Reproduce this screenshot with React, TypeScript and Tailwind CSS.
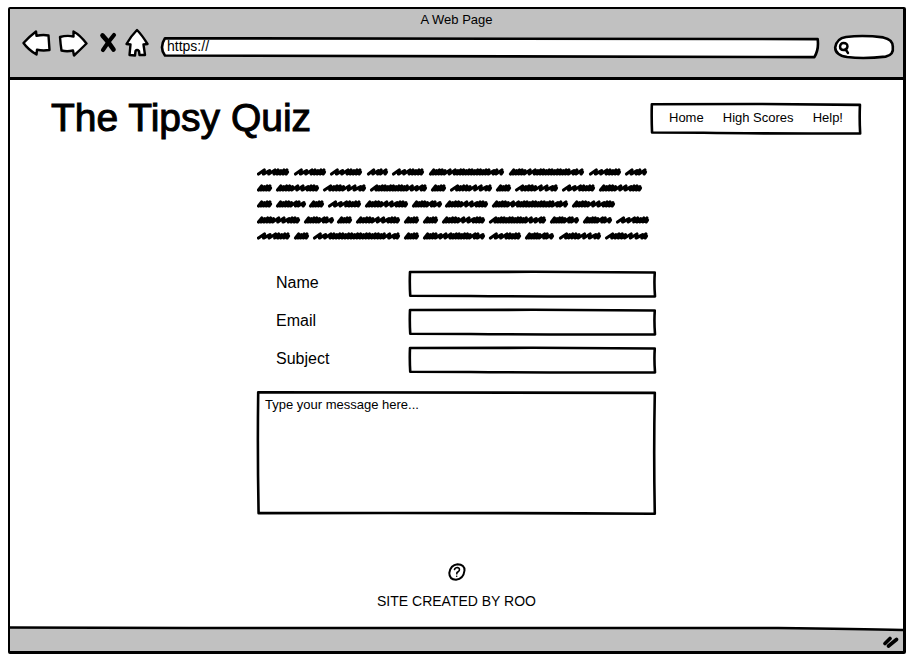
import React from "react";

/* Hand-drawn box outline that stretches with the element it decorates. */
function SketchBox({ d, fill = "none" }: { d?: string; fill?: string }) {
  return (
    <svg
      aria-hidden="true"
      className="pointer-events-none absolute inset-0 h-full w-full overflow-visible"
      viewBox="0 0 100 100"
      preserveAspectRatio="none"
    >
      <path
        d={d ?? "M0.400 4 Q25 4 50 3 Q75 5 99.500 6 Q99.200 50 99.600 98 Q50 99 25 96 L0.500 95 Q0.200 50 0.400 4Z"}
        fill={fill}
        stroke="#000"
        strokeWidth="2.6"
        strokeLinejoin="round"
        vectorEffect="non-scaling-stroke"
      />
    </svg>
  );
}

function ArrowLeft() {
  return (
    <svg width="30" height="28" viewBox="0 0 30 28" fill="#fff" stroke="#000" strokeWidth="2.4" strokeLinejoin="round">
      <path d="M1.500 14 Q8 7 14 2.500 L14.500 6.800 Q21 5.500 26.500 6.500 L27.500 21 Q21 22 15 20.800 L14.500 25.500 Q6 20.500 1.500 14Z" />
    </svg>
  );
}

function ArrowRight() {
  return (
    <svg width="30" height="28" viewBox="0 0 30 28" fill="#fff" stroke="#000" strokeWidth="2.4" strokeLinejoin="round">
      <path d="M2 8 Q9 6 15.500 7.500 L15.500 2.500 Q22 6 28.500 14.500 Q22 21 16 26.500 L15 21.500 Q9 23 3.500 21.500 Q2.500 15 2 8Z" />
    </svg>
  );
}

function Cross() {
  return (
    <svg width="18" height="22" viewBox="0 0 18 22" fill="none" stroke="#000" strokeLinecap="round">
      <path d="M3.500 3.500 Q9 9 14.500 17.500" strokeWidth="4.600" />
      <path d="M15 3 Q9 10 4 18" strokeWidth="4.200" />
    </svg>
  );
}

function House() {
  return (
    <svg width="24" height="30" viewBox="0 0 24 30" fill="#fff" stroke="#000" strokeWidth="2.4" strokeLinejoin="round">
      <path d="M12 2 Q17 7 22.500 16 L18.500 16.500 L20 27 L14.500 27 L14 23 Q12 21 10.500 23 L10 27.500 L4.500 27 L5.500 16.500 L1.500 16 Q6 8 12 2Z" />
    </svg>
  );
}

/* Each word: start, end, and stroke rhythm (l = loose, d = dense). */
type Word = [number, number, string];
const A = "llldddd";
const B = "dddd";
const C = "dddddlllddd";
const D = "lddddllld";
const E = "dddddldl";
const F = "ldddddddddddllld";
const G = "dddddllddddddddddddldl";

const scribbleRows: Word[][] = [
  [[0, 31, A], [37, 68, A], [73, 104, A], [110, 130, "lldl"], [135, 166, A], [172, 246, G], [252, 326, G], [332, 363, A], [368, 389, "lldl"]],
  [[0, 14, B], [19, 61, C], [66, 108, D], [113, 169, F], [174, 188, B], [193, 234, D], [239, 253, B], [258, 300, D], [305, 337, A], [342, 384, C]],
  [[0, 14, B], [19, 48, E], [52, 66, B], [71, 103, A], [108, 150, C], [155, 184, E], [188, 230, C], [235, 310, G], [315, 357, C]],
  [[0, 42, C], [47, 76, E], [80, 94, B], [99, 142, C], [147, 161, B], [166, 180, B], [185, 227, C], [232, 288, F], [293, 321, E], [326, 354, E], [359, 391, A]],
  [[0, 32, A], [37, 51, B], [56, 142, "lllddddddddddddddddddlld"], [147, 161, B], [166, 227, "ddddllldddddddldl"], [232, 263, A], [268, 296, E], [302, 343, D], [348, 390, D]],
];

function scribble([start, end, rhythm]: Word, y: number) {
  const units = [...rhythm].reduce((n, c) => n + (c === "l" ? 1.8 : 1), 0);
  const step = (end - start - 3) / units;
  let x = start + 1.5;
  let d = `M${x} ${y + 2}`;
  [...rhythm].forEach((c, i) => {
    const w = (c === "l" ? 1.8 : 1) * step;
    const top = y - 2 + (i % 3 === 1 ? 0.6 : 0);
    d += `L${x + w + 0.4} ${top}L${x + w - 0.4} ${y + 2}`;
    x += w;
  });
  return `${d}L${end - 0.5} ${y}`;
}

function PlaceholderText() {
  return (
    <svg role="img" aria-label="Placeholder paragraph" className="block w-full" viewBox="0 0 399 74">
      {scribbleRows.map((row, r) =>
        row.map((word) => (
          <path
            key={`${r}-${word[0]}`}
            d={scribble(word, 5 + r * 16)}
            fill="none"
            stroke="#000"
            strokeWidth="3.2"
            strokeLinecap="round"
            strokeLinejoin="round"
          />
        )),
      )}
    </svg>
  );
}

function Field({ id, label }: { id: string; label: string }) {
  return (
    <div className="flex items-center pl-[19px]">
      <label htmlFor={id} className="w-[133px] shrink-0 pb-[2px] text-base leading-5">
        {label}
      </label>
      <div className="relative h-[26px] flex-1">
        <SketchBox />
        <input id={id} type="text" className="relative block h-full w-full bg-transparent px-2 text-[13px] outline-none" />
      </div>
    </div>
  );
}

export default function App() {
  return (
    <div className="flex min-h-screen flex-col bg-white px-2 pt-[7px] pb-[9px] font-['Liberation_Sans',Arial,sans-serif] text-black">
      <div className="flex flex-1 flex-col rounded-[2px] border-2 border-r-3 border-b-3 border-black">
        <header className="flex h-[71px] flex-col border-b-3 border-black bg-[#c1c1c1]">
          <div className="pt-px text-center text-[13px] leading-5">A Web Page</div>
          <div className="flex h-[34px] items-center pr-[9px] pl-3">
            <div className="flex items-center pb-2">
              <button type="button" aria-label="Back"><ArrowLeft /></button>
              <button type="button" aria-label="Forward" className="ml-[6px]"><ArrowRight /></button>
              <button type="button" aria-label="Stop" className="ml-[11px]"><Cross /></button>
              <button type="button" aria-label="Home" className="ml-2"><House /></button>
            </div>
            <div className="relative ml-3 h-[21px] flex-1">
              <SketchBox fill="#fff" d="M0.600 6 Q50 3 99.800 10 Q100 60 99.300 96 Q50 92 0.600 88 Q-0.300 50 0.600 6Z" />
              <input
                type="text"
                aria-label="Address"
                defaultValue="https://"
                className="relative block h-[19px] w-full bg-transparent pl-[6px] text-[14px] leading-4 outline-none"
              />
            </div>
            <div className="relative ml-[15px] h-6 w-[60px]">
              <SketchBox fill="#fff" d="M20 8 Q50 0 82 10 Q98 18 98 48 Q100 84 86 90 Q50 101 22 92 Q2 84 2 52 Q4 14 20 8Z" />
              <svg className="absolute top-[6px] left-1" width="12" height="14" viewBox="0 0 12 14" fill="none" stroke="#000" strokeWidth="2.4" strokeLinecap="round">
                <path d="M5.500 2 Q9.500 2 9.500 5.500 Q9 9 5.500 9 Q2 9 2 5.500 Q2.500 2 5.500 2Z M8 9 L10 12" />
              </svg>
              <input type="search" aria-label="Search" className="relative block h-full w-full bg-transparent pr-2 pl-4 text-[13px] outline-none" />
            </div>
          </div>
        </header>

        <div className="flex items-center justify-between pt-[14px] pr-[42px] pl-[41px]">
          <h1 className="text-[39px] leading-[48px] [-webkit-text-stroke:1px_#000]">The Tipsy Quiz</h1>
          <nav className="relative flex h-[31px] w-[210px] items-center justify-between px-[18px] text-[13px]">
            <SketchBox />
            <a href="#home" className="relative">Home</a>
            <a href="#scores" className="relative">High Scores</a>
            <a href="#help" className="relative">Help!</a>
          </nav>
        </div>

        <main className="mx-auto w-[399px] max-w-full flex-1 pt-[25px]">
          <PlaceholderText />
          <form className="mt-[30px] flex flex-col gap-3">
            <Field id="name" label="Name" />
            <Field id="email" label="Email" />
            <Field id="subject" label="Subject" />
            <div className="relative mt-[6px] h-[124px]">
              <SketchBox d="M0.300 1 Q50 1.500 99.700 1.500 Q99.400 50 99.700 99 Q50 98 0.400 98.500 Q0.100 50 0.300 1Z" />
              <textarea
                aria-label="Message"
                placeholder="Type your message here..."
                className="relative block h-full w-full resize-none bg-transparent px-2 py-[6px] text-[13px] leading-4 outline-none placeholder:text-black"
              />
            </div>
          </form>
        </main>

        <footer className="flex flex-col items-center pb-[17px]">
          <button type="button" aria-label="Help">
            <svg width="18" height="18" viewBox="0 0 18 18" fill="none" stroke="#000" strokeLinecap="round">
              <path d="M9.500 1.300 Q16.800 1.500 16.500 7.500 Q15.500 16 8 16.700 Q1.300 16.500 1.300 10 Q2.500 2 9.500 1.300Z" strokeWidth="2" />
              <path d="M6.500 6.500 Q7 4.500 9.500 4.500 Q12 5 11.300 7.300 Q10.500 8.800 9 9.500 L8.800 10.800 M8.700 13.200 V13.300" strokeWidth="1.600" />
            </svg>
          </button>
          <p className="mt-[10px] text-sm leading-5">SITE CREATED BY ROO</p>
        </footer>

        <div className="relative h-[23px] bg-[#c1c1c1]">
          <svg aria-hidden="true" className="absolute inset-x-0 top-0 h-1 w-full overflow-visible" viewBox="0 0 100 4" preserveAspectRatio="none">
            <path d="M0 0 H100 V2 Q95 1 86 0 L20 0Z" fill="#fff" />
            <path d="M0 -0.500 L20 0 L86 0 Q95 1 100 2" fill="none" stroke="#000" strokeWidth="2.600" vectorEffect="non-scaling-stroke" />
          </svg>
          <svg aria-hidden="true" className="absolute right-1 bottom-[2px]" width="17" height="14" viewBox="0 0 17 14" stroke="#000" strokeWidth="3.600" strokeLinecap="round">
            <path d="M3 8.500 L8 3.500 M6.500 11 L14.500 4.500" />
          </svg>
        </div>
      </div>
    </div>
  );
}
